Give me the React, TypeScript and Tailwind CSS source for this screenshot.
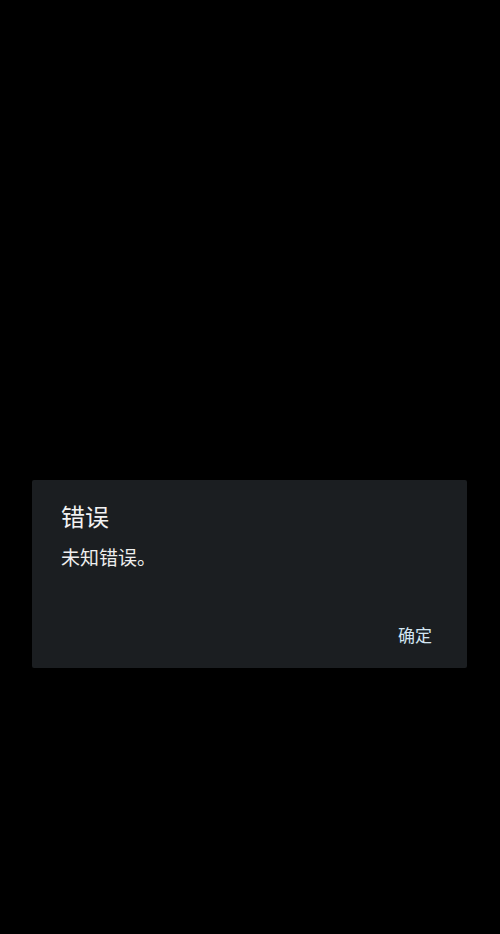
export default function App() {
  return (
    <div
      className="min-h-[934px] w-full bg-black pt-[480px] pl-[32px] pr-[33px]"
      style={{ fontFamily: '"Noto Sans CJK SC", "Noto Sans", sans-serif' }}
    >
      <div className="flex h-[188px] flex-col rounded-[2px] bg-[#1b1e21] pt-[21px] pb-[15px] pl-[29px] pr-[25px]">
        <h2 className="text-[24px] leading-[30px] text-[#f2f2f2]">错误</h2>
        <p className="mt-[13px] text-[19px] leading-[26px] text-[#eeeeee]">未知错误。</p>
        <div className="mt-auto flex justify-end">
          <button className="h-[36px] px-[10px] text-[17px] leading-[36px] text-[#d3e6f2]">确定</button>
        </div>
      </div>
    </div>
  );
}
